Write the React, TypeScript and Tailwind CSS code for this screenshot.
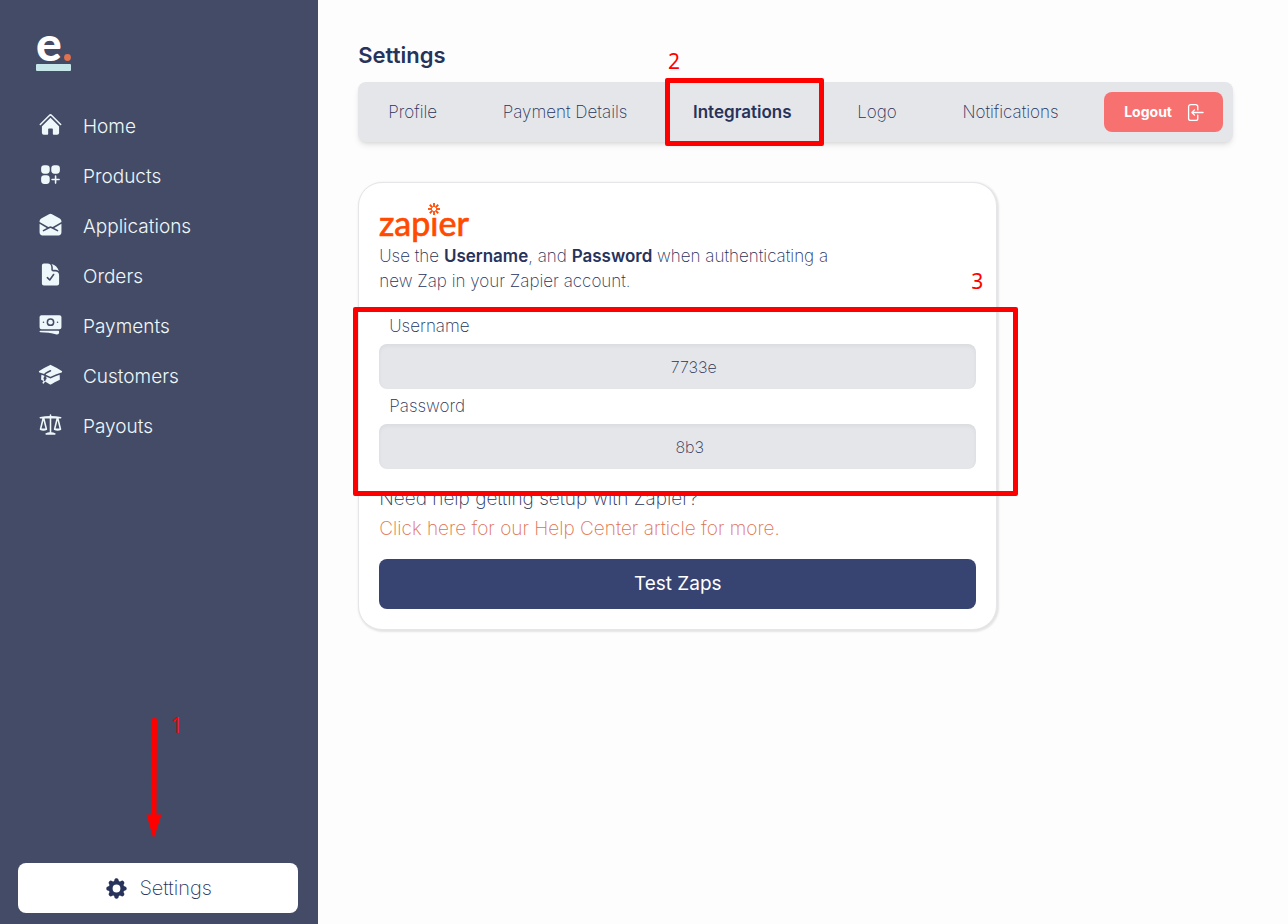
import React from 'react';
import {
  HiHome,
  HiSquaresPlus,
  HiEnvelopeOpen,
  HiDocumentCheck,
  HiBanknotes,
  HiAcademicCap,
  HiScale,
  HiCog8Tooth,
  HiOutlineArrowLeftOnRectangle,
} from 'react-icons/hi2';

const links = [
  { label: 'Home', icon: HiHome },
  { label: 'Products', icon: HiSquaresPlus },
  { label: 'Applications', icon: HiEnvelopeOpen },
  { label: 'Orders', icon: HiDocumentCheck },
  { label: 'Payments', icon: HiBanknotes },
  { label: 'Customers', icon: HiAcademicCap },
  { label: 'Payouts', icon: HiScale },
];

const tabs = ['Profile', 'Payment Details', 'Integrations', 'Logo', 'Notifications'];

const BrandLogo = () => (
  <svg width="35" height="38" viewBox="0 0 35 38" className="overflow-visible" role="img" aria-label="e.">
    <text x="0" y="28" fontSize="48" fontWeight="900" fill="#fff" className="font-['Lato',sans-serif]">e</text>
    <circle cx="31.500" cy="24.500" r="3.400" fill="#e2714d" />
    <rect y="31" width="35" height="7" rx="1" fill="#c6e6ea" />
  </svg>
);

const ZapierLogo = () => (
  <svg width="92" height="41" viewBox="0 0 92 41" className="overflow-visible" role="img" aria-label="zapier">
    <text x="0" y="33" fontSize="34" fontWeight="400" fill="#ff4a00" stroke="#ff4a00" strokeWidth="0.700" className="font-['Lato',sans-serif]">zapier</text>
    <circle cx="55" cy="6" r="7" fill="#fff" />
    <g stroke="#ff4a00" strokeWidth="1.800">
      {[0, 45, 90, 135, 180, 225, 270, 315].map((a) => (
        <line key={a} x1="55" y1="0" x2="55" y2="4" transform={`rotate(${a} 55 6)`} />
      ))}
    </g>
  </svg>
);

// Red step number used by the walkthrough
const Step: React.FC<{ n: number; className?: string }> = ({ n, className = '' }) => (
  <span className={`absolute font-['Noto_Sans',sans-serif] text-[21px] leading-5 font-normal text-[#f00] ${className}`}>{n}</span>
);

const Outline: React.FC<{ className?: string }> = ({ className = '' }) => (
  <div className={`absolute z-10 rounded-xs border-5 border-[#f00] pointer-events-none ${className}`} />
);

const Arrow: React.FC<{ className?: string }> = ({ className = '' }) => (
  <svg width="16" height="122" viewBox="0 0 16 122" className={`absolute ${className}`} aria-hidden="true">
    <line x1="8.500" y1="3" x2="8" y2="102" stroke="#f00" strokeWidth="5" strokeLinecap="round" />
    <polygon points="0.500,97.500 15.500,97.500 7.500,122" fill="#f00" />
  </svg>
);

const Field: React.FC<{ id: string; label: string; value: string; className?: string }> = ({ id, label, value, className = '' }) => (
  <div>
    <label htmlFor={id} className="block h-[35px] pl-[10px] leading-[35px]">{label}</label>
    <input
      id={id}
      type="text"
      readOnly
      defaultValue={value}
      className={`block h-[45px] w-full rounded-lg bg-[#e5e6ea] text-center text-base outline-none inset-shadow-sm ${className}`}
    />
  </div>
);

const Sidebar = () => (
  <aside className="flex w-1/4 shrink-0 flex-col bg-[#444b66] pt-[33px] pr-5 pb-[11px] pl-[18px]">
    <a href="#" className="ml-[18px] w-fit">
      <BrandLogo />
    </a>
    <nav className="mt-[31px] ml-5">
      {links.map(({ label, icon: Icon }) => (
        <a key={label} href="#" className="flex h-[50px] items-center gap-5 text-[19px] font-light text-[#eef8fa]">
          <Icon size={25} className="mb-[5px] shrink-0" />
          <span>{label}</span>
        </a>
      ))}
    </nav>
    <div className="relative mt-auto">
      <Arrow className="-top-[146px] left-[128px]" />
      <Step n={1} className="-top-[148px] left-[153px]" />
      <button type="button" className="flex h-[50px] w-full items-center justify-center gap-[10px] rounded-lg bg-white text-[20px] font-extralight">
        <HiCog8Tooth size={25} />
        Settings
      </button>
    </div>
  </aside>
);

const TabBar = () => (
  <nav className="flex h-[60px] items-center justify-between rounded-lg bg-[#e5e6ea] px-[10px] shadow-md">
    {tabs.map((tab) => {
      const active = tab === 'Integrations';
      return (
        <div key={tab} className="relative">
          <a href="#" className={`block px-5 leading-6 ${active ? 'font-semibold' : ''}`}>{tab}</a>
          {active && (
            <>
              <Step n={2} className="-top-[49px] -left-[5px]" />
              <Outline className="-top-[22px] -left-2 -right-[12px] h-[68px]" />
            </>
          )}
        </div>
      );
    })}
    <button type="button" className="flex h-10 items-center gap-3 rounded-lg bg-[#f87171] pr-[18px] pl-5 text-sm font-bold text-white">
      Logout
      <HiOutlineArrowLeftOnRectangle size={21} />
    </button>
  </nav>
);

const ZapierCard = () => (
  <section className="mt-10 w-full max-w-[639px] rounded-3xl border border-[#e5e6ea] bg-white p-5 shadow-[1px_1px_2px_1px_rgba(0,0,0,0.1)]">
    <ZapierLogo />
    <p className="max-w-[480px] leading-[25px]">
      Use the <b className="font-semibold">Username</b>, and <b className="font-semibold">Password</b> when authenticating a new Zap in your Zapier account.
    </p>
    <div className="relative mt-[15px]">
      <Step n={3} className="-top-[38px] right-[-7px]" />
      <Outline className="-top-[2px] -right-[42px] -left-[26px] h-[189px]" />
      <Field id="username" label="Username" value="7733e" className="pl-8" />
      <Field id="password" label="Password" value="8b3" className="pl-6" />
    </div>
    <div className="mt-[15px] text-[19px] leading-[30px]">
      <p>Need help getting setup with Zapier?</p>
      <a href="#" className="text-[#e0704f]">Click here for our Help Center article for more.</a>
    </div>
    <button type="button" className="mt-[15px] h-[50px] w-full rounded-lg bg-[#374371] text-[19px] font-normal text-white">
      Test Zaps
    </button>
  </section>
);

export default function App() {
  return (
    <div className="flex min-h-screen bg-[#fdfdfd] pr-[15px] font-['Inter',sans-serif] text-[17px] font-extralight text-[#27335b]">
      <Sidebar />
      <main className="flex-1 px-10 pt-10">
        <h1 className="mb-3 text-[22px] leading-[30px] font-semibold">Settings</h1>
        <TabBar />
        <ZapierCard />
      </main>
    </div>
  );
}
